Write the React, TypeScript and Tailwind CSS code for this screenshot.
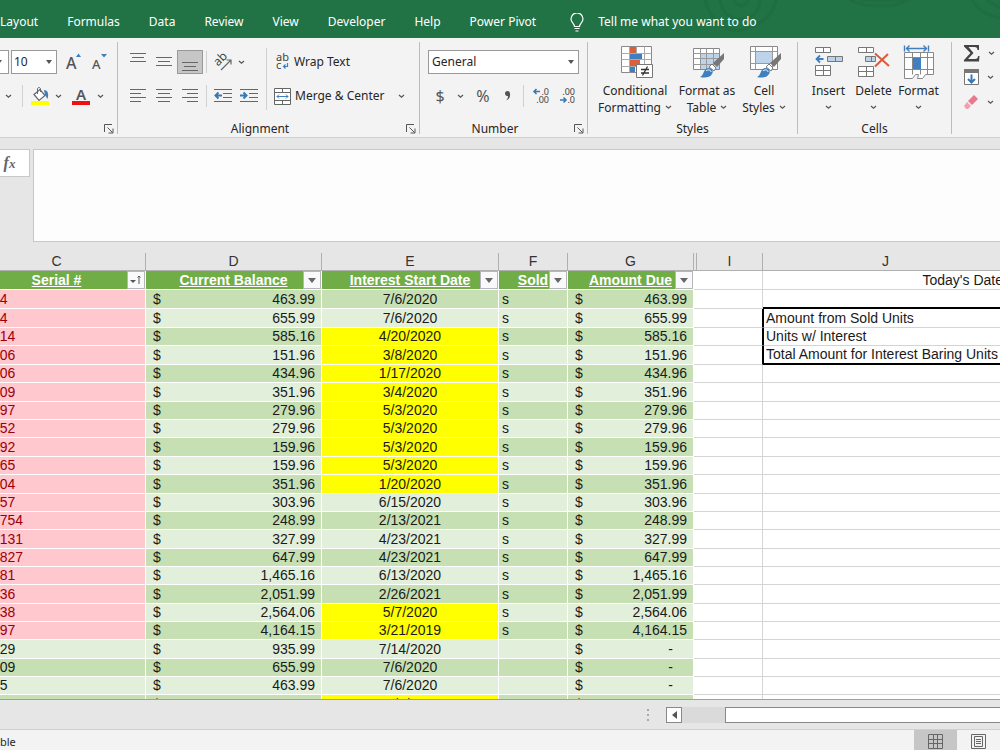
import React from "react";

type Row = { c: string; d: string; e: string; sold: boolean; g: string; late?: boolean; tall?: boolean; flagged?: boolean };

const rows: Row[] = [
  { c: "14", d: "463.99", e: "7/6/2020", sold: true, g: "463.99", tall: true, flagged: true },
  { c: "14", d: "655.99", e: "7/6/2020", sold: true, g: "655.99", tall: true, flagged: true },
  { c: "314", d: "585.16", e: "4/20/2020", sold: true, g: "585.16", late: true, flagged: true },
  { c: "306", d: "151.96", e: "3/8/2020", sold: true, g: "151.96", late: true, tall: true, flagged: true },
  { c: "306", d: "434.96", e: "1/17/2020", sold: true, g: "434.96", late: true, flagged: true },
  { c: "309", d: "351.96", e: "3/4/2020", sold: true, g: "351.96", late: true, tall: true, flagged: true },
  { c: "297", d: "279.96", e: "5/3/2020", sold: true, g: "279.96", late: true, flagged: true },
  { c: "352", d: "279.96", e: "5/3/2020", sold: true, g: "279.96", late: true, flagged: true },
  { c: "392", d: "159.96", e: "5/3/2020", sold: true, g: "159.96", late: true, tall: true, flagged: true },
  { c: "965", d: "159.96", e: "5/3/2020", sold: true, g: "159.96", late: true, flagged: true },
  { c: "304", d: "351.96", e: "1/20/2020", sold: true, g: "351.96", late: true, tall: true, flagged: true },
  { c: "357", d: "303.96", e: "6/15/2020", sold: true, g: "303.96", flagged: true },
  { c: "1754", d: "248.99", e: "2/13/2021", sold: true, g: "248.99", flagged: true },
  { c: "9131", d: "327.99", e: "4/23/2021", sold: true, g: "327.99", tall: true, flagged: true },
  { c: "9827", d: "647.99", e: "4/23/2021", sold: true, g: "647.99", flagged: true },
  { c: "381", d: "1,465.16", e: "6/13/2020", sold: true, g: "1,465.16", flagged: true },
  { c: "036", d: "2,051.99", e: "2/26/2021", sold: true, g: "2,051.99", tall: true, flagged: true },
  { c: "438", d: "2,564.06", e: "5/7/2020", sold: true, g: "2,564.06", late: true, flagged: true },
  { c: "197", d: "4,164.15", e: "3/21/2019", sold: true, g: "4,164.15", late: true, flagged: true },
  { c: "029", d: "935.99", e: "7/14/2020", sold: false, g: "-", tall: true },
  { c: "009", d: "655.99", e: "7/6/2020", sold: false, g: "-" },
  { c: "15", d: "463.99", e: "7/6/2020", sold: false, g: "-" },
  { c: "18", d: "267.96", e: "11/8/2019", sold: false, g: "-", late: true, tall: true },
];

const notes: Record<number, string> = {
  1: "Amount from Sold Units",
  2: "Units w/ Interest",
  3: "Total Amount for Interest Baring Units",
};

const tabs = ["Layout", "Formulas", "Data", "Review", "View", "Developer", "Help", "Power Pivot"];

/* ---------- small glyphs ---------- */

const Chevron = () => (
  <svg width="7" height="5" viewBox="0 0 7 5" className="shrink-0" fill="none" stroke="#555" strokeWidth="1.2">
    <path d="M1 1l2.5 2.300L6 1" />
  </svg>
);

const Caret = ({ className = "" }: { className?: string }) => (
  <svg width="6" height="4" viewBox="0 0 6 4" className={`pointer-events-none shrink-0 ${className}`}>
    <path d="M0 0h6L3 4z" fill="#555" />
  </svg>
);

const Lines = ({ d }: { d: string }) => (
  <svg width="16" height="20" viewBox="0 0 16 20" className="shrink-0" stroke="#666" fill="none">
    <path d={d} />
  </svg>
);

const FontSizeIcon = ({ grow }: { grow?: boolean }) => (
  <svg width="20" height="20" viewBox="0 0 20 20">
    <text x="1" y="17" fontSize={grow ? 16 : 13} fontWeight="500" fontFamily="Noto Sans" fill="#555">A</text>
    <path d={grow ? "M11 5l2.500-3.500L16 5z" : "M10 2h6l-3 3.500z"} fill="#3f7fbf" />
  </svg>
);

const FillIcon = () => (
  <svg width="20" height="20" viewBox="0 0 20 20" fill="none">
    <path d="M4 8.500l6-5 5 6-6 5z" fill="#fff" stroke="#666" strokeWidth="1.200" />
    <path d="M7.500 8V3c0-2 3-2 3 0v3" stroke="#666" />
    <path d="M14 4c4 0 5 4 3.500 9L15 9z" fill="#3f7fbf" />
    <path d="M1 15h18v4H1z" fill="#ffff00" />
  </svg>
);

const FontColorIcon = () => (
  <svg width="20" height="20" viewBox="0 0 20 20">
    <text x="5" y="14" fontSize="15" fontWeight="600" fontFamily="Noto Sans" fill="#555">A</text>
    <path d="M1 15h18v4H1z" fill="#ee1111" />
  </svg>
);

const OrientationIcon = () => (
  <svg width="20" height="20" viewBox="0 0 20 20" className="overflow-visible" fill="none">
    <text x="3" y="14" fontSize="12" fontFamily="Noto Sans" fill="#444" transform="rotate(-45 5 12)">ab</text>
    <path d="M8 18L18 8M13.500 8H18v4.500" stroke="#666" strokeWidth="1.200" />
  </svg>
);

const IndentIcon = ({ right }: { right?: boolean }) => (
  <svg width="18" height="16" viewBox="0 0 18 16" fill="none">
    <path d="M0 1.500h18M9 5.500h9M9 9.500h9M0 13.500h18" stroke="#666" />
    <path d={right ? "M0 7.500h6.500M3.500 4.500l3 3-3 3" : "M8 7.500H1.500M4.500 4.500l-3 3 3 3"} stroke="#3a78b5" strokeWidth="2" />
  </svg>
);

const WrapIcon = () => (
  <svg width="16" height="20" viewBox="0 0 16 20" className="overflow-visible" fill="none">
    <text x="2" y="9" fontSize="11" fontFamily="Noto Sans" fill="#444">ab</text>
    <text x="2" y="17" fontSize="11" fontFamily="Noto Sans" fill="#444">c</text>
    <path d="M13.500 11v3.500H10M11.500 12.500L9.500 14.500l2 2" stroke="#3f7fbf" strokeWidth="1.200" />
  </svg>
);

const MergeIcon = () => (
  <svg width="17" height="17" viewBox="0 0 17 17" fill="#fff" stroke="#666">
    <path d="M.5.5h16v16H.5zM.5 4.500h16M.5 12.500h16M8.500.5v4M8.500 12.500v4" />
    <path d="M3 8.500h11M5 6.500l-2 2 2 2M12 6.500l2 2-2 2" stroke="#3f7fbf" fill="none" />
  </svg>
);

const DecimalIcon = ({ more }: { more?: boolean }) => (
  <svg width="18" height="18" viewBox="0 0 18 18" className="overflow-visible" fill="none">
    <text x="17" y="8" fontSize="9" textAnchor="end" fontFamily="Noto Sans" fill="#444">{more ? ".0" : ".00"}</text>
    <text x="17" y="16" fontSize="9" textAnchor="end" fontFamily="Noto Sans" fill="#444">{more ? ".00" : ".0"}</text>
    <path d={more ? "M8 4.500H2M4.500 2L2 4.500 4.500 7" : "M2 13h6M5.500 10.500L8 13l-2.500 2.500"} stroke="#3a78b5" strokeWidth="1.600" />
  </svg>
);

/* ---------- large ribbon drawings ---------- */

const Brush = () => (
  <g>
    <path d="M32 8v6l-7 8-4-4z" fill="#777" />
    <path d="M20 19l4 4-2 3-5-4z" fill="#fff" stroke="#777" />
    <path d="M8 32c4-1 3-8 8-9 4 0 6 3 4 6-2 4-8 4-12 3z" fill="#3f7fbf" />
    <path d="M14 26c2-2 5-1 5 1" stroke="#fff" fill="none" />
  </g>
);

const ConditionalIcon = () => (
  <svg width="34" height="34" viewBox="0 0 34 34" className="ml-[3px]">
    <path d="M1.500 1.500h30v26h-30z" fill="#fff" stroke="#888" />
    <path d="M1.500 8.500h30M1.500 14.500h30M1.500 21.500h30M9.500 1.500v26M16.500 1.500v26M24.500 1.500v26" stroke="#aaa" fill="none" />
    <path d="M10 2h6v6h-6zM10 15h10v6H10z" fill="#d9603b" />
    <path d="M10 9h12v5H10zM10 22h5v5h-5z" fill="#3f7fbf" />
    <path d="M16.500 19.500h16v13h-16z" fill="#fff" stroke="#777" />
    <path d="M21 24.500h8M21 28h8M27.500 21.500l-5 9" stroke="#333" fill="none" strokeWidth="1.300" />
  </svg>
);

const TableIcon = () => (
  <svg width="34" height="34" viewBox="0 0 34 34" className="ml-1">
    <path d="M1.500 3.500h26v21h-26z" fill="#fff" stroke="#888" />
    <path d="M8 9h19v15H8z" fill="#bdd3ea" />
    <path d="M1.500 8.500h26M1.500 13.500h26M1.500 19.500h26M8.500 3.500v21M14.500 3.500v21M21.500 3.500v21" stroke="#999" fill="none" />
    <Brush />
  </svg>
);

const StyleIcon = () => (
  <svg width="34" height="34" viewBox="0 0 34 34" className="ml-1">
    <path d="M1.500 1.500h27v23h-27z" fill="#fff" stroke="#888" />
    <path d="M1.500 6.500h27M1.500 18.500h27M6.500 1.500v23M23.500 1.500v23" stroke="#999" fill="none" />
    <path d="M7 7h16v11H7z" fill="#bdd3ea" />
    <Brush />
  </svg>
);

const InsertIcon = () => (
  <svg width="30" height="34" viewBox="0 0 30 34" fill="#fff" stroke="#777">
    <path d="M1.500 2.500h15v5h-15zM9.500 2.500v5M1.500 20.500h15v10h-15zM1.500 25.500h15M9.500 20.500v10" />
    <path d="M13.500 11.500h15v5h-15zM21.500 11.500v5" fill="#bdd3ea" />
    <path d="M9.500 14h-7M6 10.500L2.500 14 6 17.500" stroke="#3f7fbf" strokeWidth="1.800" fill="none" />
  </svg>
);

const DeleteIcon = () => (
  <svg width="34" height="34" viewBox="0 0 34 34" fill="#fff" stroke="#777">
    <path d="M1.500 2.500h15v5h-15zM9.500 2.500v5M1.500 21.500h15v10h-15zM1.500 26.500h15M9.500 21.500v10" />
    <path d="M8.500 11.500h10v5h-10zM14.500 11.500v5" fill="#bdd3ea" />
    <path d="M18 8.500l14 12.500M31 9L18 21.500" stroke="#dc5a38" strokeWidth="2" fill="none" />
  </svg>
);

const FormatIcon = () => (
  <svg width="34" height="36" viewBox="0 0 34 36" fill="#fff" stroke="#888">
    <path d="M2.500 8.500h29v22h-8l-3 4h-5l1-4h-3l-3 4h-8z" />
    <path d="M2.500 13.500h29M2.500 25.500h29M10.500 8.500v22M18.500 8.500v22M25.500 8.500v22" fill="none" />
    <path d="M11 14h8v11h-8z" fill="#3f7fbf" stroke="none" />
    <path d="M2.500 1.500v6M26.500 1.500v6M4 4.500h21M7.500 1.500l-3 3 3 3M21.500 1.500l3 3-3 3" stroke="#3f7fbf" strokeWidth="1.400" fill="none" />
  </svg>
);

/* ---------- ribbon parts ---------- */

const IconButton = ({ label, children, className = "" }: { label: string; children: React.ReactNode; className?: string }) => (
  <button aria-label={label} className={`flex h-6 shrink-0 items-center justify-center ${className}`}>
    {children}
  </button>
);

const Separator = ({ className = "" }: { className?: string }) => (
  <div className={`h-[22px] w-px shrink-0 bg-[#d0d0d0] ${className}`} />
);

const Group = ({ label, launcher, className, children }: { label?: string; launcher?: boolean; className: string; children: React.ReactNode }) => (
  <div className={`flex h-[92px] shrink-0 flex-col justify-between border-[#bdbdbd] ${className}`}>
    {children}
    <div className="flex h-[11px] items-center">
      <span className="flex-1 text-center leading-[11px]">{label}</span>
      {launcher && (
        <button aria-label={`${label || "Font"} settings`} className="mr-[3px] ml-1">
          <svg width="10" height="10" viewBox="0 0 10 10" fill="none" stroke="#555">
            <path d="M.5 8V.5H8M3.500 3.500l5 5M9 4.500V9H4.500" />
          </svg>
        </button>
      )}
    </div>
  </div>
);

const BigButton = ({ icon, lines, className }: { icon: React.ReactNode; lines: string[]; className: string }) => (
  <button className={`flex flex-col items-center leading-[17px] ${className}`}>
    <span className="flex h-10 items-center">{icon}</span>
    <span>{lines[0]}</span>
    <span className="flex h-[17px] items-center gap-1">
      {lines[1]}
      <Chevron />
    </span>
  </button>
);

/* ---------- sheet parts ---------- */

const FilterButton = ({ label, sorted }: { label: string; sorted?: boolean }) => (
  <button
    aria-label={`Filter ${label}`}
    className="absolute top-0 right-0 flex h-[18px] w-[18px] items-center justify-center border border-[#b5b5bd] bg-[#f9f9fb]"
  >
    {sorted ? (
      <svg width="12" height="12" viewBox="0 0 12 12">
        <path d="M0 6h6L3 9z" fill="#555" />
        <path d="M9 10V2M7.500 3.500L9 2l1.500 1.500" stroke="#555" fill="none" />
      </svg>
    ) : (
      <svg width="8" height="5" viewBox="0 0 8 5">
        <path d="M0 0h8L4 5z" fill="#666" />
      </svg>
    )}
  </button>
);

const Heading = ({ label, sorted }: { label: string; sorted?: boolean }) => (
  <th className="relative border-r border-b border-white bg-[#70ad47] p-0 text-center font-bold text-white underline">
    {label}
    <FilterButton label={label} sorted={sorted} />
  </th>
);

const Money = ({ value }: { value: string }) => (
  <div className="flex justify-between pr-[6px] pl-[7px]">
    <span>$</span>
    <span className={value === "-" ? "pr-[14px]" : ""}>{value}</span>
  </div>
);

const letters = ["C", "D", "E", "F", "G", "", "I", "J"];

export default function App() {
  return (
    <div className="flex h-screen flex-col overflow-hidden bg-[#e6e6e6] font-['Noto_Sans',sans-serif] text-[#262626]">
      <nav className="relative flex h-[38px] shrink-0 items-center overflow-hidden bg-[#217346] pt-[6px] text-[12px] whitespace-nowrap text-white">
        <svg className="absolute top-0 right-0" width="320" height="38" viewBox="0 0 320 38" fill="none" stroke="#1f6d41" strokeWidth="3">
          <path d="M25 0c5 20 20 32 35 30s33-12 36-30M40 0c2 12 10 20 22 19s18-10 18-19M54 0c1 7 12 8 14 0" />
          <path d="M170 0c15 8 45 8 58 0l-10 0H180M292 0c6 10 14 15 28 18M306 0l14 8" />
        </svg>
        <div className="relative flex items-center gap-[29px]">
          {tabs.map((t) => (
            <button key={t}>{t}</button>
          ))}
          <button className="flex items-center gap-[14px] pl-[5px]">
            <svg width="14" height="19" viewBox="0 0 14 19" fill="none" stroke="#fff" strokeWidth="1.200">
              <path d="M4.500 13.500c0-3-3.500-4-3.500-7.500a6 6 0 0112 0c0 3.500-3.500 4.500-3.500 7.500zM4.500 15.500h5M5.500 18h3" />
            </svg>
            Tell me what you want to do
          </button>
        </div>
      </nav>

      <section className="flex h-[100px] shrink-0 overflow-hidden border-b border-[#cfcfcf] bg-[#f3f3f3] pt-1 text-[12px] whitespace-nowrap">
        <Group launcher className="w-[118px] border-r">
          <div>
            <div className="flex h-10 items-center">
              <button aria-label="Font" className="flex h-6 w-[9px] items-center border border-l-0 border-[#999] bg-white">
                <Caret className="-ml-1" />
              </button>
              <div className="relative ml-[2px] flex items-center">
                <select aria-label="Font size" className="h-6 w-[46px] appearance-none border border-[#999] bg-white pl-[2px]">
                  <option>10</option>
                </select>
                <Caret className="absolute right-[5px]" />
              </div>
              <IconButton label="Increase font size" className="ml-[5px] w-[26px]"><FontSizeIcon grow /></IconButton>
              <IconButton label="Decrease font size" className="w-[26px]"><FontSizeIcon /></IconButton>
            </div>
            <div className="flex h-[28px] items-center">
              <IconButton label="Borders" className="w-[17px]"><Chevron /></IconButton>
              <Separator className="mx-[5px]" />
              <IconButton label="Fill color" className="w-[23px]"><FillIcon /></IconButton>
              <IconButton label="Fill options" className="w-[14px]"><Chevron /></IconButton>
              <IconButton label="Font color" className="ml-1 w-[24px]"><FontColorIcon /></IconButton>
              <IconButton label="Font color options" className="w-[14px]"><Chevron /></IconButton>
            </div>
          </div>
        </Group>

        <Group label="Alignment" launcher className="w-[302px] border-r">
          <div className="flex">
            <div className="pl-[7px]">
              <div className="flex h-10 items-center">
                <IconButton label="Top align" className="w-[26px]"><Lines d="M0 1.500h16M2 5.500h12M0 9.500h16" /></IconButton>
                <IconButton label="Middle align" className="w-[26px]"><Lines d="M0 5.500h16M2 9.500h12M0 13.500h16" /></IconButton>
                <IconButton label="Bottom align" className="w-[26px] border border-[#999] bg-[#c6c6c6]"><Lines d="M0 10.500h16M2 14.500h12M0 18.500h16" /></IconButton>
                <Separator className="mx-[3px]" />
                <IconButton label="Orientation" className="w-[26px]"><OrientationIcon /></IconButton>
                <IconButton label="Orientation options" className="w-[10px]"><Chevron /></IconButton>
              </div>
              <div className="flex h-[28px] items-center">
                <IconButton label="Align left" className="w-[26px]"><Lines d="M0 3.500h16M0 7.500h11M0 11.500h16M0 15.500h11" /></IconButton>
                <IconButton label="Center" className="w-[26px]"><Lines d="M0 3.500h16M2 7.500h12M0 11.500h16M2 15.500h12" /></IconButton>
                <IconButton label="Align right" className="w-[26px]"><Lines d="M0 3.500h16M5 7.500h11M0 11.500h16M5 15.500h11" /></IconButton>
                <Separator className="mx-[3px]" />
                <IconButton label="Decrease indent" className="w-[26px]"><IndentIcon /></IconButton>
                <IconButton label="Increase indent" className="w-[26px]"><IndentIcon right /></IconButton>
              </div>
            </div>
            <div className="mt-[6px] ml-1 w-px bg-[#d0d0d0]" />
            <div className="pl-[7px]">
              <button className="flex h-10 items-center gap-1"><WrapIcon />Wrap Text</button>
              <div className="flex h-[28px] items-center">
                <button className="flex items-center gap-1"><MergeIcon />Merge &amp; Center</button>
                <IconButton label="Merge options" className="ml-[7px] w-5"><Chevron /></IconButton>
              </div>
            </div>
          </div>
        </Group>

        <Group label="Number" launcher className="w-[168px] border-r">
          <div className="px-2">
            <div className="relative flex h-10 items-center">
              <select aria-label="Number format" className="h-6 w-full appearance-none border border-[#999] bg-white pl-[3px]">
                <option>General</option>
              </select>
              <Caret className="absolute right-[5px]" />
            </div>
            <div className="flex h-[28px] items-center text-[#555]">
              <IconButton label="Currency" className="w-6 text-[16px]">$</IconButton>
              <IconButton label="Currency options" className="w-4"><Chevron /></IconButton>
              <IconButton label="Percent" className="w-[30px] text-[16px]">%</IconButton>
              <IconButton label="Comma style" className="w-5">
                <svg width="6" height="10" viewBox="0 0 6 10"><path d="M0 2.500a2.500 2.500 0 015 0C5.500 6 4 8.500 1 9.500 2.500 8 3 6.500 3 5A2.500 2.500 0 010 2.500z" fill="#555" /></svg>
              </IconButton>
              <Separator className="mr-1 ml-[5px]" />
              <IconButton label="Increase decimal" className="w-[26px]"><DecimalIcon more /></IconButton>
              <IconButton label="Decrease decimal" className="w-[26px]"><DecimalIcon /></IconButton>
            </div>
          </div>
        </Group>

        <Group label="Styles" className="w-[210px] border-r">
          <div className="flex gap-[6px] pl-[10px]">
            <BigButton icon={<ConditionalIcon />} lines={["Conditional", "Formatting"]} className="w-[74px]" />
            <BigButton icon={<TableIcon />} lines={["Format as", "Table"]} className="w-[58px]" />
            <BigButton icon={<StyleIcon />} lines={["Cell", "Styles"]} className="w-[44px]" />
          </div>
        </Group>

        <Group label="Cells" className="w-[154px] border-r">
          <div className="flex pl-2">
            <BigButton icon={<InsertIcon />} lines={["Insert"]} className="w-[45px]" />
            <BigButton icon={<DeleteIcon />} lines={["Delete"]} className="w-[45px]" />
            <BigButton icon={<FormatIcon />} lines={["Format"]} className="w-[45px]" />
          </div>
        </Group>

        <Group className="flex-1">
          <div className="flex flex-col pl-[10px]">
            <button aria-label="AutoSum" className="flex h-[22px] items-center gap-2">
              <svg width="18" height="18" viewBox="0 0 18 18" fill="#444">
                <path d="M2 1h15v5h-1.500c0-2-1-3-3-3H6.500l5 6-5.500 6h7c2 0 3-1 3-3H17.500L17 17.500H2V16l6.500-7L2 2.500z" />
              </svg>
              <Chevron />
            </button>
            <button aria-label="Fill" className="flex h-[26px] items-center gap-[7px]">
              <svg width="18" height="18" viewBox="0 0 18 18" fill="none">
                <path d="M2.500 1.500h14v15h-14z" fill="#fff" stroke="#777" />
                <path d="M2 1h15v4H2z" fill="#777" />
                <path d="M9.500 6.500v8M6 11l3.500 3.500L13 11" stroke="#3a78b5" strokeWidth="2" />
              </svg>
              <Chevron />
            </button>
            <button aria-label="Clear" className="flex h-[24px] items-center gap-[7px]">
              <svg width="18" height="18" viewBox="0 0 18 18">
                <path d="M12 2l4 4-6 6-4-4z" fill="#e8788c" />
                <path d="M5 9l4 4-3 3H4l-2-3z" fill="#f0a0ae" />
              </svg>
              <Chevron />
            </button>
          </div>
        </Group>
      </section>

      <section className="flex shrink-0 items-start gap-[3px] pt-[11px] pb-[11px]">
        <button aria-label="Insert function" className="h-7 w-[30px] border border-l-0 border-[#c8c8c8] bg-white pr-[10px] font-['Liberation_Serif',serif] text-[16px] leading-[22px] font-bold text-[#666] italic">
          f<span className="text-[13px]">x</span>
        </button>
        <textarea aria-label="Formula" className="h-[93px] flex-1 resize-none border border-r-0 border-[#c8c8c8] bg-[#fdfdfd]" />
      </section>

      <main className="min-h-0 flex-1 overflow-hidden border-b border-[#a0a0a0] bg-white font-['Liberation_Sans',Arial,sans-serif] text-[14px] leading-[17px] whitespace-nowrap text-[#1a1a1a]">
        <div className="-ml-8">
          <table className="w-full table-fixed border-separate border-spacing-0">
            <colgroup>
              <col className="w-[178px]" />
              <col className="w-[176px]" />
              <col className="w-[177px]" />
              <col className="w-[69px]" />
              <col className="w-[126px]" />
              <col className="w-[3px]" />
              <col className="w-[66px]" />
              <col className="w-[246px]" />
              <col />
            </colgroup>
            <thead>
              <tr className="h-[18px] bg-[#e6e6e6]">
                {letters.map((l, i) => (
                  <th key={i} className="border-r border-b border-[#b0b0b0] p-0 text-center font-normal text-[#333]">
                    {l}
                  </th>
                ))}
                <th className="border-b border-[#b0b0b0] p-0" />
              </tr>
              <tr className="h-[19px]">
                <Heading label="Serial #" sorted />
                <Heading label="Current Balance" />
                <Heading label="Interest Start Date" />
                <Heading label="Sold" />
                <Heading label="Amount Due" />
                <td className="border-b border-[#d4d4d4] p-0" />
                <td className="border-r border-b border-[#d4d4d4] p-0" />
                <td className="border-r border-b border-[#d4d4d4] p-0 pr-[5px] text-right">Today's Date</td>
                <td className="border-b border-[#d4d4d4] p-0" />
              </tr>
            </thead>
            <tbody>
              {rows.map((r, i) => {
                const band = i % 2 === 0 ? "bg-[#c6e0b4]" : "bg-[#e2efda]";
                const boxed = i >= 1 && i <= 3;
                const cell = `border-r border-b border-white p-0 ${band}`;
                return (
                  <tr key={i} className={r.tall ? "h-[19px]" : "h-[18px]"}>
                    <td className={`border-r border-b border-white p-0 pl-6 ${r.flagged ? "bg-[#ffc7ce] text-[#9c0006]" : band}`}>{r.c}</td>
                    <td className={cell}><Money value={r.d} /></td>
                    <td className={`border-r border-b border-white p-0 text-center ${r.late ? "bg-[#ffff00]" : band}`}>{r.e}</td>
                    <td className={`${cell} pl-[3px]`}>{r.sold ? "s" : ""}</td>
                    <td className={cell}><Money value={r.g} /></td>
                    <td className="border-b border-[#d4d4d4] p-0" />
                    <td className={`border-b border-[#d4d4d4] p-0 ${boxed ? "border-r border-r-black" : "border-r"}`} />
                    <td
                      className={`p-0 pl-[2px] ${boxed ? "border-l border-l-black" : ""} ${
                        i === 0 || i === 3 ? "border-b-2 border-b-black" : "border-b border-b-[#d4d4d4]"
                      } border-r border-r-[#d4d4d4]`}
                    >
                      {notes[i]}
                    </td>
                    <td className="border-b border-[#d4d4d4] p-0" />
                  </tr>
                );
              })}
            </tbody>
          </table>
        </div>
      </main>

      <div className="flex h-[30px] shrink-0 items-center border-b border-[#cfcfcf]">
        <div className="flex w-[650px] shrink-0 flex-col items-end gap-[3px] pr-[1px]">
          <span className="h-[2px] w-[2px] bg-[#aaa]" />
          <span className="h-[2px] w-[2px] bg-[#aaa]" />
          <span className="h-[2px] w-[2px] bg-[#aaa]" />
        </div>
        <button aria-label="Scroll left" className="ml-4 flex h-4 w-4 shrink-0 items-center justify-center border border-[#888] bg-white">
          <svg width="5" height="8" viewBox="0 0 5 8"><path d="M5 0v8L0 4z" fill="#555" /></svg>
        </button>
        <div className="flex h-4 flex-1 bg-[#dadada] pl-[43px]">
          <div className="h-4 flex-1 border border-r-0 border-[#888] bg-white" />
        </div>
      </div>

      <footer className="flex h-5 shrink-0 items-center bg-[#f3f3f3] text-[11px]">
        <span className="flex-1 pt-1">ble</span>
        <button aria-label="Normal view" className="flex h-5 w-[43px] items-center justify-center bg-[#c6c6c6] pt-[2px]">
          <svg width="15" height="15" viewBox="0 0 15 15" fill="none" stroke="#666">
            <path d="M.5.5h14v14H.5zM.5 5.500h14M.5 9.500h14M5.500.5v14M9.500.5v14" />
          </svg>
        </button>
        <button aria-label="Page layout" className="flex h-5 w-[43px] items-center justify-center pt-[2px]">
          <svg width="15" height="15" viewBox="0 0 15 15" fill="none" stroke="#666">
            <path d="M.5.5h14v14H.5zM3.500 2.500h8v10h-8zM5 5.500h5M5 7.500h5M5 9.500h5" />
          </svg>
        </button>
      </footer>
    </div>
  );
}
